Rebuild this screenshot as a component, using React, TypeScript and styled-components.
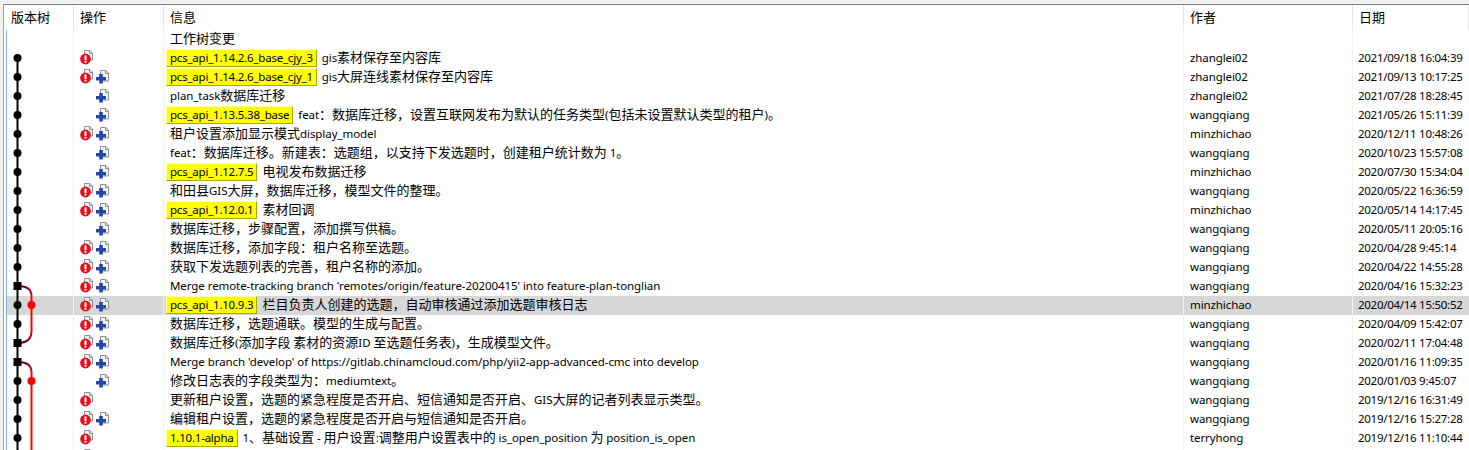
import React from "react";
import styled, { createGlobalStyle } from "styled-components";

const Global = createGlobalStyle`
  html, body { margin: 0; padding: 0; background: #f0f0f0; overflow: hidden; }
  #root { height: 450px; overflow: hidden; }
`;

const Frame = styled.div`
  margin: 4px 0 0 3px;
  height: 446px;
  overflow: hidden;
  background: #fff;
  border-top: 1px solid #808080;
  border-left: 1px solid #a0a0a0;
  font-family: "Noto Sans", "Noto Sans CJK SC", sans-serif;
  font-size: 11.5px;
  color: #000;
`;

const Grid = styled.div`
  display: grid;
  grid-template-columns: 3px 67px 90px 1020px 169px 1fr;
`;

const HeaderCell = styled.div`
  height: 25px;
  line-height: 24px;
  padding-left: 6px;
  border-right: 1px solid #e5e5e5;
  font-size: 13px;
  box-sizing: border-box;
  &:first-child { padding: 0; border: 0; }
  &:nth-child(2) { padding-left: 4px; }
  &:last-child { padding-left: 5px; border: 0; }
`;

const Row = styled.div<{ $selected?: boolean }>`
  grid-column: 1 / -1;
  display: grid;
  grid-template-columns: subgrid;
  height: 19px;
  background: ${(p) => (p.$selected ? "#d7d7d7" : "transparent")};
`;

const Rail = styled.div`
  border-right: 1px solid #7db6ee;
  background: #fff;
  box-sizing: border-box;
`;

const GraphCell = styled.div`
  border-right: 1px solid #eef3fa;
  height: 19px;
`;

const GraphSvg = styled.svg`
  display: block;
  overflow: visible;
  width: 66px;
  height: 19px;
`;

const OpsCell = styled.div`
  display: flex;
  padding-left: 5px;
  border-right: 1px solid #eef3fa;
  height: 19px;
`;

const IconSlot = styled.svg`
  display: block;
  width: 16px;
  height: 16px;
  flex: none;
  overflow: visible;
`;

const MessageCell = styled.div`
  display: flex;
  align-items: flex-start;
  padding-left: 2px;
  border-right: 1px solid #eef3fa;
  height: 19px;
  white-space: nowrap;
  overflow: hidden;
`;

const Tag = styled.span`
  flex: none;
  height: 18px;
  line-height: 16px;
  padding: 0 3px;
  margin-right: 1px;
  box-sizing: border-box;
  letter-spacing: -0.22px;
  background: #ffff00;
  border: 1px solid;
  border-color: #ffffa0 #a8a800 #a8a800 #ffffa0;
`;

const Message = styled.span`
  margin-left: 4px;
  line-height: 17px;
  height: 17px;
  letter-spacing: -0.07px;
`;

const Cjk = styled.span`
  font-size: 13px;
  letter-spacing: 0;
`;

const TextCell = styled.div`
  padding-left: 6px;
  line-height: 18px;
  height: 19px;
  white-space: nowrap;
  letter-spacing: -0.1px;
  border-right: 1px solid #eef3fa;
`;

const LastCell = styled(TextCell)`
  padding-left: 5px;
  letter-spacing: -0.28px;
  border-right: 0;
`;

const Mixed = ({ text }: { text: string }) => (
  <>
    {text.split(/([\u2E80-\u9FFF\uFF00-\uFFEF]+)/).map((part, i) =>
      i % 2 ? <Cjk key={i}>{part}</Cjk> : part
    )}
  </>
);

const ErrorIcon = () => (
  <IconSlot viewBox="0 0 16 16">
    <path d="M5.5 1.5h5.5l2.5 2.5v7h-8z" fill="#f4f4f6" stroke="#8d8f96" />
    <path d="M10.5 1.5v3h3" fill="#d6d8dc" stroke="#8d8f96" />
    <circle cx="6.5" cy="10" r="5.4" fill="#e8101a" />
    <rect x="5.5" y="6.4" width="2" height="4.6" fill="#fff" />
    <rect x="5.5" y="11.8" width="2" height="1.8" fill="#fff" />
  </IconSlot>
);

const PlusIcon = () => (
  <IconSlot viewBox="0 0 16 16">
    <path d="M5.5 2.5h5.5l2.5 2.5v8h-8z" fill="#f4f4f6" stroke="#8d8f96" />
    <path d="M10.5 2.5v3h3" fill="#d6d8dc" stroke="#8d8f96" />
    <path d="M4.2 6h3.6v3h3.2v3.4H7.8v3H4.2v-3H1V9h3.2z" fill="#2348ac" />
  </IconSlot>
);

type G = "none" | "start" | "dot" | "merge" | "mergeEnd";
type R = "none" | "line" | "dot" | "tail";

interface Commit {
  tags?: string;
  msg: string;
  author?: string;
  date?: string;
  err?: boolean;
  add?: boolean;
  g: G;
  r?: R;
  selected?: boolean;
}

const X = 10.5;
const RX = 24.5;
const CY = 9;

const Graph = ({ g, r = "none" }: { g: G; r?: R }) => (
  <GraphSvg viewBox="0 0 66 19">
    <defs>
      <linearGradient id="branchOut" x1="0" y1="0" x2="1" y2="1">
        <stop offset="0" stopColor="#300" />
        <stop offset="1" stopColor="#c8101a" />
      </linearGradient>
      <linearGradient id="branchIn" x1="0" y1="1" x2="1" y2="0">
        <stop offset="0" stopColor="#300" />
        <stop offset="1" stopColor="#c8101a" />
      </linearGradient>
    </defs>
    {g !== "none" && (
      <line x1={X} x2={X} y1={g === "start" ? CY : 0} y2={19} stroke="#000" strokeWidth="2" />
    )}
    {g === "merge" && (
      <path d={`M${X} ${CY}C${X + 9} ${CY} ${RX} ${CY + 3} ${RX} 19`} fill="none" stroke="url(#branchOut)" strokeWidth="2" />
    )}
    {g === "mergeEnd" && (
      <path d={`M${RX} -3C${RX} 5 ${X + 9} ${CY} ${X} ${CY}`} fill="none" stroke="url(#branchIn)" strokeWidth="2" />
    )}
    {(r === "line" || r === "dot") && <line x1={RX} x2={RX} y1={0} y2={19} stroke="#f00" strokeWidth="2" />}
    {r === "tail" && <line x1={RX} x2={RX} y1={0} y2={16} stroke="#f00" strokeWidth="2" />}
    {r === "dot" && <circle cx={RX} cy={CY} r="4" fill="#f00" />}
    {(g === "dot" || g === "start") && <circle cx={X} cy={CY} r="4" fill="#000" />}
    {(g === "merge" || g === "mergeEnd") && <rect x={X - 4} y={CY - 4} width="8" height="8" fill="#000" />}
  </GraphSvg>
);

const commits: Commit[] = [
  { msg: "工作树变更", g: "none" },
  { tags: "pcs_api_1.14.2.6_base_cjy_3", msg: "gis素材保存至内容库", author: "zhanglei02", date: "2021/09/18 16:04:39", err: true, g: "start" },
  { tags: "pcs_api_1.14.2.6_base_cjy_1", msg: "gis大屏连线素材保存至内容库", author: "zhanglei02", date: "2021/09/13 10:17:25", err: true, add: true, g: "dot" },
  { msg: "plan_task数据库迁移", author: "zhanglei02", date: "2021/07/28 18:28:45", add: true, g: "dot" },
  { tags: "pcs_api_1.13.5.38_base", msg: "feat：数据库迁移，设置互联网发布为默认的任务类型(包括未设置默认类型的租户)。", author: "wangqiang", date: "2021/05/26 15:11:39", add: true, g: "dot" },
  { msg: "租户设置添加显示模式display_model", author: "minzhichao", date: "2020/12/11 10:48:26", err: true, add: true, g: "dot" },
  { msg: "feat：数据库迁移。新建表：选题组，以支持下发选题时，创建租户统计数为 1。", author: "wangqiang", date: "2020/10/23 15:57:08", add: true, g: "dot" },
  { tags: "pcs_api_1.12.7.5", msg: "电视发布数据迁移", author: "minzhichao", date: "2020/07/30 15:34:04", add: true, g: "dot" },
  { msg: "和田县GIS大屏，数据库迁移，模型文件的整理。", author: "wangqiang", date: "2020/05/22 16:36:59", err: true, add: true, g: "dot" },
  { tags: "pcs_api_1.12.0.1", msg: "素材回调", author: "minzhichao", date: "2020/05/14 14:17:45", err: true, add: true, g: "dot" },
  { msg: "数据库迁移，步骤配置，添加撰写供稿。", author: "wangqiang", date: "2020/05/11 20:05:16", add: true, g: "dot" },
  { msg: "数据库迁移，添加字段：租户名称至选题。", author: "wangqiang", date: "2020/04/28 9:45:14", err: true, add: true, g: "dot" },
  { msg: "获取下发选题列表的完善，租户名称的添加。", author: "wangqiang", date: "2020/04/22 14:55:28", err: true, add: true, g: "dot" },
  { msg: "Merge remote-tracking branch 'remotes/origin/feature-20200415' into feature-plan-tonglian", author: "wangqiang", date: "2020/04/16 15:32:23", err: true, add: true, g: "merge" },
  { tags: "pcs_api_1.10.9.3", msg: "栏目负责人创建的选题，自动审核通过添加选题审核日志", author: "minzhichao", date: "2020/04/14 15:50:52", err: true, add: true, g: "dot", r: "dot", selected: true },
  { msg: "数据库迁移，选题通联。模型的生成与配置。", author: "wangqiang", date: "2020/04/09 15:42:07", err: true, add: true, g: "dot", r: "tail" },
  { msg: "数据库迁移(添加字段 素材的资源ID 至选题任务表)，生成模型文件。", author: "wangqiang", date: "2020/02/11 17:04:48", err: true, add: true, g: "mergeEnd" },
  { msg: "Merge branch 'develop' of https://gitlab.chinamcloud.com/php/yii2-app-advanced-cmc into develop", author: "wangqiang", date: "2020/01/16 11:09:35", err: true, add: true, g: "merge" },
  { msg: "修改日志表的字段类型为：mediumtext。", author: "wangqiang", date: "2020/01/03 9:45:07", add: true, g: "dot", r: "dot" },
  { msg: "更新租户设置，选题的紧急程度是否开启、短信通知是否开启、GIS大屏的记者列表显示类型。", author: "wangqiang", date: "2019/12/16 16:31:49", err: true, g: "dot", r: "line" },
  { msg: "编辑租户设置，选题的紧急程度是否开启与短信通知是否开启。", author: "wangqiang", date: "2019/12/16 15:27:28", err: true, add: true, g: "dot", r: "line" },
  { tags: "1.10.1-alpha", msg: "1、基础设置 - 用户设置:调整用户设置表中的 is_open_position 为 position_is_open", author: "terryhong", date: "2019/12/16 11:10:44", err: true, g: "dot", r: "line" },
  { msg: "", err: true, add: true, g: "dot", r: "line" },
];

const headers = ["", "版本树", "操作", "信息", "作者", "日期"];

export default function App() {
  return (
    <>
      <Global />
      <Frame>
        <Grid>
          {headers.map((h, i) => (
            <HeaderCell key={i}>{h}</HeaderCell>
          ))}
          {commits.map((c, i) => (
            <Row key={i} $selected={c.selected}>
              <Rail />
              <GraphCell>
                <Graph g={c.g} r={c.r} />
              </GraphCell>
              <OpsCell>
                {c.err ? <ErrorIcon /> : <IconSlot />}
                {c.add && <PlusIcon />}
              </OpsCell>
              <MessageCell>
                {c.tags && <Tag>{c.tags}</Tag>}
                <Message>
                  <Mixed text={c.msg} />
                </Message>
              </MessageCell>
              <TextCell>{c.author}</TextCell>
              <LastCell>{c.date}</LastCell>
            </Row>
          ))}
        </Grid>
      </Frame>
    </>
  );
}
